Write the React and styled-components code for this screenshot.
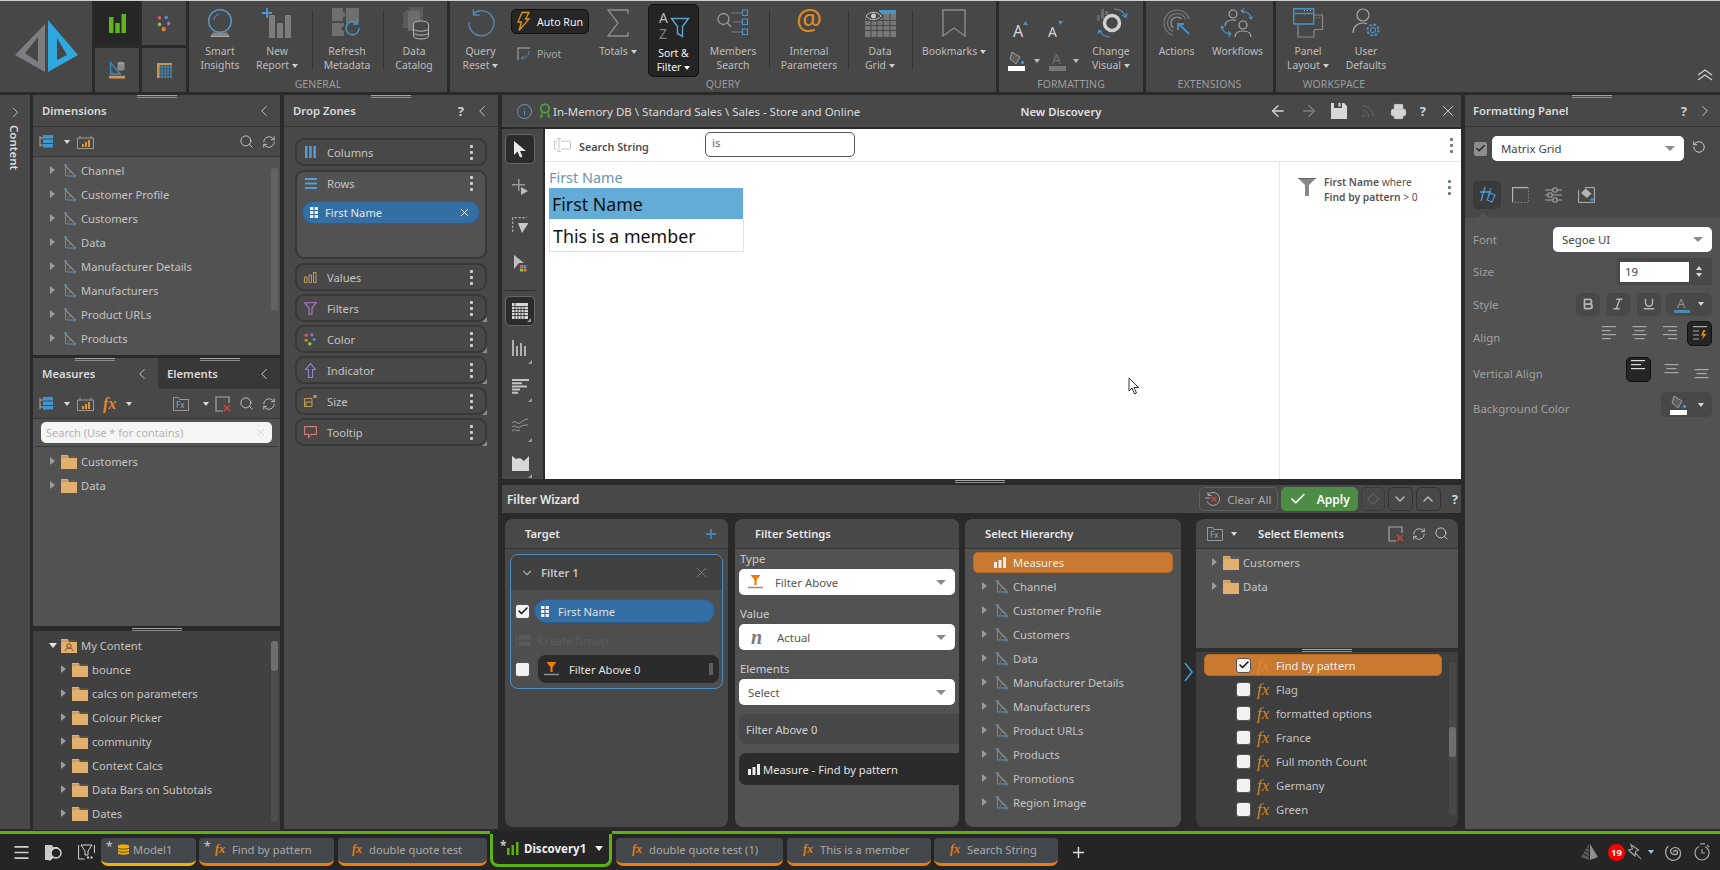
import React from 'react';
import styled, { createGlobalStyle } from 'styled-components';
import { ChevronLeft, ChevronRight, ChevronDown, ChevronUp, X, Search, RefreshCw, Plus, Check, ArrowLeft, ArrowRight, Printer, Rss, Info, Menu, RotateCcw, Bold, Italic, Underline } from 'lucide-react';

const Global = createGlobalStyle`
  html, body { margin: 0; padding: 0; width: 1720px; height: 870px; overflow: hidden; background: #2a2a2a; }
  * { box-sizing: border-box; }
  body { font-family: "Noto Sans", "Open Sans", sans-serif; font-size: 11.2px; color: #c4c4c4; }
`;

const Page = styled.div`width:1720px;height:870px;display:flex;flex-direction:column;background:#2a2a2a;overflow:hidden;`;
const Svg = styled.svg`display:block;flex:none;overflow:visible;`;

/* ---------- shared bits ---------- */
const Tri = styled.span`
  display:inline-block;flex:none;width:0;height:0;
  border-left:${p=>p.$s||3.5}px solid transparent;border-right:${p=>p.$s||3.5}px solid transparent;
  border-top:${p=>(p.$s||3.5)+1}px solid ${p=>p.$c||'#cfcfcf'};
  margin-left:${p=>p.$ml??3}px;vertical-align:1px;
`;
const Caret = styled.span`
  display:block;flex:none;width:0;height:0;margin-right:${p=>p.$open?3:5}px;
  ${p=>p.$open?'border-left:4px solid transparent;border-right:4px solid transparent;border-top:5px solid #e6e6e6;':'border-top:4px solid transparent;border-bottom:4px solid transparent;border-left:5px solid #9c9c9c;margin-left:1px;'}
`;
const Grip = styled.div`
  position:absolute;left:${p=>p.$x}px;top:${p=>p.$y||0}px;width:${p=>p.$w||40}px;height:3px;z-index:3;
  border-top:1px solid #a4a4a4;border-bottom:1px solid #8c8c8c;
`;
const FxMark = styled.span`
  flex:none;font-family:"Liberation Serif",serif;font-style:italic;font-weight:${p=>p.$fw||700};
  color:${p=>p.$c||'#e57f12'};font-size:${p=>p.$size||12}px;line-height:1;white-space:nowrap;
`;
const KebabWrap = styled.div`display:flex;flex-direction:column;gap:3px;flex:none;align-items:center;margin-top:${p=>p.$mt||0}px;`;
const KebabDot = styled.i`display:block;width:3px;height:3px;background:${p=>p.$c||'#d0d0d0'};border-radius:1px;`;
const Kebab = ({c, mt}) => <KebabWrap $mt={mt}><KebabDot $c={c}/><KebabDot $c={c}/><KebabDot $c={c}/></KebabWrap>;

const HierIcon = () => (
  <Svg width="15" height="15" viewBox="0 0 15 15" fill="none">
    <path d="M1.500 3L3.500 1L5.500 3M3.500 1V13H13M11.500 11.200L14 13L11.500 14.800" stroke="#5f94b8" strokeWidth="1"/>
    <path d="M4 3.500L11.500 11" stroke="#bdbdbd" strokeWidth="1"/>
    <path d="M6 11L9 8" stroke="#8a8a8a" strokeWidth=".8"/>
  </Svg>
);
const FolderIcon = () => (
  <Svg width="16" height="15" viewBox="0 0 16 15" fill="none">
    <path d="M0 1h7l1 3h8v11H0z" fill="#e1b06f"/>
    <path d="M0 3h16" stroke="#8e7350" strokeWidth=".6"/>
  </Svg>
);
const HierBars = ({c='#eee'}) => (
  <Svg width="12" height="11" viewBox="0 0 12 11"><path d="M0 5h3v6H0zM4.500 3h3v8h-3zM9 0h3v11H9z" fill={c}/></Svg>
);
const MemberGrid = ({c='#eee'}) => (
  <Svg width="8" height="11" viewBox="0 0 8 11"><path d="M0 0h3.400v3H0zM4.600 0H8v3H4.600zM0 4h3.400v3H0zM4.600 4H8v3H4.600zM0 8h3.400v3H0zM4.600 8H8v3H4.600z" fill={c}/></Svg>
);
const FilterAbove = () => (
  <Svg width="15" height="14" viewBox="0 0 15 14" fill="none">
    <path d="M2.500 0h10L8.600 5v5H6.400V5z" fill="#ef7d0a"/><path d="M0 12.500h15" stroke="#8f8f8f" strokeWidth="1.500"/>
  </Svg>
);
const FxFolder = () => (
  <Svg width="16" height="14" viewBox="0 0 16 14" fill="none">
    <path d="M.5 13.500V.5h5l1 2h9v11z" stroke="#9a9a9a"/>
    <text x="3" y="11" fontSize="8" fill="#a8a8a8" fontFamily="Noto Sans">Fx</text>
  </Svg>
);
const XSquare = () => (
  <Svg width="16" height="16" viewBox="0 0 16 16" fill="none">
    <path d="M14 7V1H1v14h7" stroke="#a8a8a8" strokeWidth="1.200"/><path d="M9 9l6 6M15 9l-6 6" stroke="#d8462f" strokeWidth="1.400"/>
  </Svg>
);
const CalcChart = () => (
  <Svg width="17" height="14" viewBox="0 0 17 14" fill="none">
    <path d="M.5 3h16v10.500H.5z" stroke="#9a9a9a"/><path d="M3 .5v3M14 .5v3" stroke="#9a9a9a"/>
    <path d="M5 9h2v3H5zM8 7h2v5H8zM11 5h2v7h-2z" fill="#e0952e"/>
  </Svg>
);
const TreeToggle = () => (
  <Svg width="15" height="13" viewBox="0 0 15 13" fill="none">
    <path d="M1 1v11M1 3h3M1 10h3" stroke="#a5a5a5"/><path d="M4 0h10v3.500H4zM4 4.500h10V8H4zM4 9h10v3.500H4z" fill="#3f97d1"/>
  </Svg>
);

/* ---------- ribbon ---------- */
const Ribbon = styled.header`height:92px;flex:none;display:flex;gap:3px;border-top:1px solid #cfcfcf;`;
const Block = styled.section`width:${p=>p.$w}px;${p=>p.$grow?'flex:1;':''}background:#474747;display:flex;flex-direction:column;position:relative;`;
const LogoBlock = styled(Block)`align-items:flex-start;justify-content:flex-start;padding:19px 0 0 15px;`;
const Tiles = styled.div`width:91px;display:grid;grid-template-columns:1fr 1fr;grid-template-rows:1fr 1fr;gap:3px;`;
const Tile = styled.div`background:${p=>p.$on?'#262626':'#474747'};display:flex;align-items:center;justify-content:center;`;
const GroupItems = styled.div`height:76px;display:flex;align-items:flex-start;flex:none;`;
const GroupName = styled.div`height:15px;line-height:14px;text-align:center;font-size:10.500px;color:#9c9c9c;letter-spacing:.1px;`;
const Item = styled.div`
  width:${p=>p.$w}px;margin-left:${p=>p.$ml||0}px;flex:none;height:${p=>p.$on?73:74}px;margin-top:${p=>p.$on?3:0}px;
  display:flex;flex-direction:column;align-items:center;padding-top:${p=>p.$on?0:2}px;
  ${p=>p.$on?'background:#242424;border:1px solid #111;border-radius:5px;':''}
`;
const IconBox = styled.div`height:40px;display:flex;align-items:center;justify-content:center;flex:none;margin-bottom:1px;`;
const ItemLabel = styled.div`font-size:10.400px;line-height:14px;text-align:center;white-space:nowrap;color:${p=>p.$on?'#f4f4f4':'#bdbdbd'};`;
const Divider = styled.div`width:1px;height:59px;margin:9px ${p=>p.$r||0}px 0 ${p=>p.$l||0}px;background:#333;flex:none;`;
const StackCol = styled.div`width:78px;flex:none;display:flex;flex-direction:column;`;
const AutoRunBtn = styled.div`
  margin-top:8px;width:78px;height:25px;background:#262626;border:1px solid #101010;border-radius:5px;
  display:flex;align-items:center;justify-content:center;gap:7px;color:#f2f2f2;font-size:10.600px;
`;
const PivotBtn = styled.div`margin:13px 0 0 6px;display:flex;align-items:center;gap:6px;color:#a6a6a6;font-size:10.400px;`;
const FormatGrid = styled.div`width:85px;flex:none;display:flex;flex-direction:column;`;
const FormatRow = styled.div`height:${p=>p.$h}px;display:flex;align-items:center;padding:${p=>p.$pt||0}px 0 0 ${p=>p.$pl}px;`;
const Gap = styled.div`width:${p=>p.$w}px;flex:none;`;
const WorkBody = styled.div`width:116px;display:flex;flex-direction:column;`;
const WorkRow = styled.div`display:flex;height:100%;`;
const Collapse = styled.div`margin-left:auto;padding:68px 7px 0 0;`;

const LogoMark = () => (
  <Svg width="64" height="54" viewBox="0 0 64 54">
    <path fillRule="evenodd" d="M30 4L0 35L30 52zM23 17L10 33L23 42z" fill="#7b7d80"/>
    <path fillRule="evenodd" d="M33 0L63 35L33 52zM42 18V40L52 35z" fill="#2fa8de"/>
  </Svg>
);
const TileBars = () => <Svg width="17" height="19" viewBox="0 0 19 19" preserveAspectRatio="none"><path d="M0 3h5v16H0zM7 9h5v10H7zM14 0h5v19h-5z" fill="#5db61e"/></Svg>;
const TileDots = () => (
  <Svg width="15" height="17" viewBox="0 0 18 18" preserveAspectRatio="none">
    <circle cx="3" cy="3" r="2" fill="#d85a5a"/><circle cx="11" cy="2.500" r="2" fill="#3f97d1"/>
    <circle cx="3" cy="10" r="2" fill="#8bc34a"/><circle cx="14" cy="9" r="2" fill="#9b6fce"/><circle cx="8" cy="15" r="2.500" fill="#e07b2e"/>
  </Svg>
);
const TileModel = () => (
  <Svg width="16" height="18" viewBox="0 0 20 22" fill="none" preserveAspectRatio="none">
    <path d="M2 16V2l12 14z" stroke="#4488b4" strokeWidth="1.800"/><path d="M4 12v3h3" stroke="#4488b4"/>
    <ellipse cx="15" cy="3" rx="4.500" ry="2" fill="#9a9a9a"/><path d="M10.500 4v6c0 2 9 2 9 0V4" fill="#8a8a8a"/>
    <path d="M0 18h20v3.500H0z" fill="#c99454"/>
  </Svg>
);
const TileGrid = () => (
  <Svg width="15" height="15" viewBox="0 0 17 20" fill="none" preserveAspectRatio="none">
    <path d="M0 0h17v3H0zM0 0h3v20H0z" fill="#c99454"/>
    <path d="M4 4h13v16H4z" fill="#4488b4"/>
    <path d="M4 8h13M4 12h13M4 16h13M7.500 4v16M11 4v16M14 4v16" stroke="#474747"/>
  </Svg>
);
const IcoBall = () => (
  <Svg width="26" height="29" viewBox="0 0 26 29" fill="none">
    <circle cx="13" cy="12" r="11.300" stroke="#5a9ac6" strokeWidth="1.400"/>
    <path d="M7 11c0-3 2-5 5-6" stroke="#5a9ac6"/>
    <path d="M6 23.500h14l3 4H3z" fill="#848484"/><path d="M4 27.500h18" stroke="#a8a8a8"/>
  </Svg>
);
const IcoNewReport = () => (
  <Svg width="30" height="30" viewBox="0 0 30 30" fill="none">
    <path d="M5 0v10M0 5h10" stroke="#4a9bd0" strokeWidth="1.800"/>
    <path d="M7 7h6v23H7zM15 15h6v15h-6zM23 7h6v23h-6z" fill="#7c7c7c"/>
  </Svg>
);
const IcoRefresh = () => (
  <Svg width="30" height="30" viewBox="0 0 30 30" fill="none">
    <path d="M0 0h11v4a2.500 2.500 0 0 1 0 5v4H0zM14 0h13v14h-6a7 7 0 0 0-7 2z" fill="#6f6f6f"/>
    <path d="M0 15h12v3a2.500 2.500 0 0 0 0 5v5H0z" fill="#6f6f6f"/>
    <path d="M27 20a6.500 6.500 0 1 1-2-4.500" stroke="#4b93c2" strokeWidth="1.500"/><path d="M25.500 11.500v4.500h-4.500" stroke="#4b93c2" strokeWidth="1.500"/>
  </Svg>
);
const IcoCatalog = () => (
  <Svg width="29" height="32" viewBox="0 0 29 32" fill="none">
    <path d="M3 5h3V3h3V0h14v24H9v-3H3z" fill="#5a5a5a"/><path d="M8 4h12v20H8z" fill="#6c6c6c"/>
    <ellipse cx="21" cy="17" rx="7.500" ry="3" fill="#474747" stroke="#b4b4b4"/>
    <path d="M13.500 17v12c0 4 15 4 15 0V17M13.500 21.500c0 3.500 15 3.500 15 0M13.500 25.500c0 3.500 15 3.500 15 0" fill="#474747" stroke="#b4b4b4"/>
  </Svg>
);
const IcoReset = () => (
  <Svg width="28" height="28" viewBox="0 0 28 28" fill="none">
    <path d="M6 5a12.500 12.500 0 1 1-4 8" stroke="#5488ad" strokeWidth="1.400"/><path d="M6.500 0v6h6" stroke="#5488ad" strokeWidth="1.400"/>
  </Svg>
);
const IcoBolt = () => (
  <Svg width="13" height="19" viewBox="0 0 13 19" fill="none"><path d="M5 .5h7L8.500 7H12L2 18.500 4.500 10H1z" stroke="#e2940f" strokeWidth="1.300"/></Svg>
);
const IcoPivot = () => (
  <Svg width="14" height="14" viewBox="0 0 14 14" fill="none">
    <path d="M1 13V1h12" stroke="#8a8a8a" strokeWidth="1.500"/>
    <path d="M12 4c0 5-3 7-7 7M7 8.500L4.500 11 7 13.500" stroke="#5488ad"/>
  </Svg>
);
const IcoSigma = () => (
  <Svg width="22" height="28" viewBox="0 0 22 28" fill="none"><path d="M21 5V1H1l10 13L1 27h20v-4" stroke="#909090" strokeWidth="1.300"/></Svg>
);
const IcoSort = () => (
  <Svg width="30" height="30" viewBox="0 0 30 30" fill="none">
    <text x="0" y="13" fontSize="14" fill="#bdbdbd" fontFamily="Noto Sans">A</text>
    <text x="0" y="29" fontSize="14" fill="#7e7e7e" fontFamily="Noto Sans">Z</text>
    <path d="M12.500 8.500h17l-6 8v10l-5-3v-7z" stroke="#5aa0cf" strokeWidth="1.500"/>
  </Svg>
);
const IcoMembers = () => (
  <Svg width="32" height="30" viewBox="0 0 32 30" fill="none">
    <circle cx="6.500" cy="11" r="5.500" stroke="#9a9a9a" strokeWidth="1.300"/><path d="M10.500 15L14 19" stroke="#9a9a9a" strokeWidth="1.300"/>
    <path d="M14 5h11M16 14h9M14 24h11" stroke="#7d7d7d"/>
    <path d="M25.500 2h5v5.500h-5zM25.500 11h5v5.500h-5zM25.500 21h5v5.500h-5z" stroke="#4b93c2" strokeWidth="1.200"/>
  </Svg>
);
const IcoAt = () => (
  <Svg width="28" height="30" viewBox="0 0 28 30">
    <text x="14" y="22" textAnchor="middle" fontSize="29" fill="#d98a22" fontFamily="Noto Sans">@</text>
  </Svg>
);
const IcoDataGrid = () => (
  <Svg width="31" height="27" viewBox="0 0 31 27" fill="none">
    <path d="M0 4h31v23H0z" fill="#777"/>
    <path d="M0 10.500h31M0 15.500h31M0 20.500h31M6 4v23M12 4v23M18 4v23M25 4v23" stroke="#474747"/>
    <path d="M14 0h17v4H14z" fill="#4b93c2"/>
    <ellipse cx="8.500" cy="6" rx="8.500" ry="5.500" fill="#474747"/>
    <path d="M1 6c4-5 11-5 15 0-4 5-11 5-15 0z" stroke="#c8c8c8"/><circle cx="8.500" cy="6" r="2.500" fill="#c8c8c8"/>
  </Svg>
);
const IcoBookmark = () => (
  <Svg width="24" height="28" viewBox="0 0 24 28" fill="none"><path d="M1 1h22v26L12 19 1 27z" stroke="#8a8a8a" strokeWidth="1.400"/></Svg>
);
const IcoFontSize = ({up}) => (
  <Svg width="16" height="18" viewBox="0 0 16 18" fill="none">
    <text x="0" y="17" fontSize={up?16:14} fill="#d4d4d4" fontFamily="Noto Sans">A</text>
    <path d={up?'M10 5l2.500-4L15 5z':'M10 1h5l-2.500 4z'} fill="#4b93c2"/>
  </Svg>
);
const IcoBucket = () => (
  <Svg width="18" height="20" viewBox="0 0 18 20" fill="none">
    <path d="M4 1l8 5-4 7-6-5z" stroke="#9c9c9c" fill="#5f5f5f"/><circle cx="14.500" cy="11.500" r="1.700" fill="#3f97d1"/>
    <path d="M0 15h17v5H0z" fill="#fff"/>
  </Svg>
);
const IcoFontColor = () => (
  <Svg width="18" height="20" viewBox="0 0 18 20" fill="none">
    <text x="3" y="13" fontSize="14" fill="#6e6e6e" fontFamily="Noto Sans">A</text><path d="M0 15h17v5H0z" fill="#777"/>
  </Svg>
);
const IcoChange = () => (
  <Svg width="32" height="32" viewBox="0 0 32 32" fill="none">
    <circle cx="17" cy="16" r="7.500" stroke="#d0d0d0" strokeWidth="3.500"/>
    <path d="M2 14h2.500V8H2zM6 12h3V2H6zM10 8h3V4h-3z" fill="#6a6a6a"/>
    <path d="M19 2c6 0 10 3 12 8M27 8l4 2.500 1-4.500M15 30c-5 0-9-3-11-7M7 25l-3-2-1 4" stroke="#4b93c2" strokeWidth="1.200"/>
  </Svg>
);
const IcoActions = () => (
  <Svg width="28" height="28" viewBox="0 0 28 28" fill="none">
    <circle cx="14" cy="14" r="13" stroke="#7a7a7a" strokeWidth="1.200"/><circle cx="14" cy="14" r="9.500" stroke="#7a7a7a" strokeWidth="1.200"/>
    <circle cx="14" cy="14" r="6" stroke="#9a9a9a" strokeWidth="1.200"/>
    <path d="M18 10h11v18H10v-9z" fill="#474747"/>
    <path d="M16 15l10 10" stroke="#4b93c2" strokeWidth="1.800"/><path d="M15 21v-6h6" stroke="#4b93c2" strokeWidth="1.800"/>
  </Svg>
);
const IcoWorkflows = () => (
  <Svg width="31" height="30" viewBox="0 0 31 30" fill="none">
    <circle cx="11" cy="6" r="4" stroke="#a8a8a8" strokeWidth="1.200"/><path d="M3 18c0-4 3-6 8-6 1 0 2 0 3 .5" stroke="#a8a8a8" strokeWidth="1.200"/>
    <circle cx="21" cy="17" r="4" stroke="#a8a8a8" strokeWidth="1.200"/><path d="M13 29c0-4 3-6 8-6s8 2 8 6" stroke="#a8a8a8" strokeWidth="1.200"/>
    <path d="M19 3c5 0 10 3 10 8l-2-2M29 11l1.500-2.500M19 3l3-2.500M19 3l3 2.500" stroke="#4b93c2" strokeWidth="1.100"/>
    <path d="M9 26c-5 0-9-3-9-8l2 2M0 18l-1.500 2.500M9 26l-3 2.500M9 26l-3-2.500" stroke="#4b93c2" strokeWidth="1.100"/>
  </Svg>
);
const IcoPanel = () => (
  <Svg width="30" height="30" viewBox="0 0 30 30" fill="none">
    <path d="M.7.700h20V16H.7z" stroke="#4b93c2" strokeWidth="1.400"/><path d="M.7 5.500h20" stroke="#4b93c2" strokeWidth="1.400"/>
    <path d="M11 2.500h1M14 2.500h1M17 2.500h1" stroke="#bcbcbc"/>
    <path d="M21 7h8.500v14.500H21" stroke="#8a8a8a" strokeWidth="1.200"/><path d="M23 9.500h1M26 9.500h1" stroke="#8a8a8a"/>
    <path d="M5 17v12h16v-7" stroke="#8a8a8a" strokeWidth="1.200"/>
  </Svg>
);
const IcoUser = () => (
  <Svg width="29" height="30" viewBox="0 0 29 30" fill="none">
    <circle cx="11" cy="7" r="6" stroke="#a8a8a8" strokeWidth="1.200"/><path d="M1 25c0-6 4-10 10-10 2 0 3 .3 4 1" stroke="#a8a8a8" strokeWidth="1.200"/>
    <circle cx="21" cy="22" r="2.500" stroke="#4b93c2" strokeWidth="1.200"/><circle cx="21" cy="22" r="5.500" stroke="#4b93c2" strokeWidth="2" strokeDasharray="2.500 1.800"/>
  </Svg>
);

const RibbonBar = () => (
  <Ribbon>
    <LogoBlock $w={92}><LogoMark/></LogoBlock>
    <Tiles>
      <Tile $on><TileBars/></Tile><Tile><TileDots/></Tile>
      <Tile><TileModel/></Tile><Tile><TileGrid/></Tile>
    </Tiles>
    <Block $w={258}>
      <GroupItems>
        <Item $w={62}><IconBox><IcoBall/></IconBox><ItemLabel>Smart<br/>Insights</ItemLabel></Item>
        <Item $w={52}><IconBox><IcoNewReport/></IconBox><ItemLabel>New<br/>Report<Tri/></ItemLabel></Item>
        <Divider $l={9} $r={4}/>
        <Item $w={60}><IconBox><IcoRefresh/></IconBox><ItemLabel>Refresh<br/>Metadata</ItemLabel></Item>
        <Divider $l={6} $r={4}/>
        <Item $w={52}><IconBox><IcoCatalog/></IconBox><ItemLabel>Data<br/>Catalog</ItemLabel></Item>
      </GroupItems>
      <GroupName>GENERAL</GroupName>
    </Block>
    <Block $w={546}>
      <GroupItems>
        <Item $w={61}><IconBox><IcoReset/></IconBox><ItemLabel>Query<br/>Reset<Tri/></ItemLabel></Item>
        <StackCol>
          <AutoRunBtn><IcoBolt/>Auto Run</AutoRunBtn>
          <PivotBtn><IcoPivot/>Pivot</PivotBtn>
        </StackCol>
        <Item $w={58}><IconBox><IcoSigma/></IconBox><ItemLabel>Totals<Tri/></ItemLabel></Item>
        <Item $w={51} $ml={1} $on><IconBox><IcoSort/></IconBox><ItemLabel $on>Sort &amp;<br/>Filter<Tri $c="#fff"/></ItemLabel></Item>
        <Item $w={64} $ml={2}><IconBox><IcoMembers/></IconBox><ItemLabel>Members<br/>Search</ItemLabel></Item>
        <Divider $l={4}/>
        <Item $w={76} $ml={1}><IconBox><IcoAt/></IconBox><ItemLabel>Internal<br/>Parameters</ItemLabel></Item>
        <Divider $l={1}/>
        <Item $w={60} $ml={1}><IconBox><IcoDataGrid/></IconBox><ItemLabel>Data<br/>Grid<Tri/></ItemLabel></Item>
        <Divider $l={2}/>
        <Item $w={76} $ml={3}><IconBox><IcoBookmark/></IconBox><ItemLabel>Bookmarks<Tri/></ItemLabel></Item>
      </GroupItems>
      <GroupName>QUERY</GroupName>
    </Block>
    <Block $w={144}>
      <GroupItems>
        <FormatGrid>
          <FormatRow $h={45} $pt={11} $pl={14}><IcoFontSize up/><Gap $w={19}/><IcoFontSize/></FormatRow>
          <FormatRow $h={30} $pl={9}><IcoBucket/><Tri $ml={8} $c="#bdbdbd"/><Gap $w={9}/><IcoFontColor/><Tri $ml={6} $c="#bdbdbd"/></FormatRow>
        </FormatGrid>
        <Item $w={54}><IconBox><IcoChange/></IconBox><ItemLabel>Change<br/>Visual<Tri/></ItemLabel></Item>
      </GroupItems>
      <GroupName>FORMATTING</GroupName>
    </Block>
    <Block $w={127}>
      <GroupItems>
        <Item $w={61}><IconBox><IcoActions/></IconBox><ItemLabel>Actions</ItemLabel></Item>
        <Item $w={61}><IconBox><IcoWorkflows/></IconBox><ItemLabel>Workflows</ItemLabel></Item>
      </GroupItems>
      <GroupName>EXTENSIONS</GroupName>
    </Block>
    <Block $grow>
      <WorkRow>
        <WorkBody>
          <GroupItems>
            <Item $w={64}><IconBox><IcoPanel/></IconBox><ItemLabel>Panel<br/>Layout<Tri/></ItemLabel></Item>
            <Item $w={52}><IconBox><IcoUser/></IconBox><ItemLabel>User<br/>Defaults</ItemLabel></Item>
          </GroupItems>
          <GroupName>WORKSPACE</GroupName>
        </WorkBody>
        <Collapse><Svg width="16" height="12" viewBox="0 0 16 12" fill="none"><path d="M1 6l7-5 7 5M1 11l7-5 7 5" stroke="#cfcfcf" strokeWidth="1.300"/></Svg></Collapse>
      </WorkRow>
    </Block>
  </Ribbon>
);

/* ---------- left column ---------- */
const Body = styled.main`height:734px;margin-top:3px;flex:none;display:flex;gap:4px;`;
const ContentStrip = styled.aside`width:30px;margin-right:-1px;background:#484848;display:flex;flex-direction:column;align-items:center;padding-top:9px;`;
const ContentText = styled.div`writing-mode:vertical-rl;margin-top:4px;font-size:11.500px;font-weight:600;color:#dcdcdc;margin-left:-1px;`;
const LeftCol = styled.div`width:247px;display:flex;flex-direction:column;position:relative;`;
const PanelHead = styled.div`
  height:${p=>p.$h||32}px;flex:none;display:flex;align-items:center;padding:0 ${p=>p.$pr||7}px 0 ${p=>p.$pl||9}px;position:relative;
  background:${p=>p.$dark?'#383838':'#484848'};border-bottom:1px solid #363636;
`;
const HeadTitle = styled.div`flex:1;font-size:11.300px;font-weight:600;color:#dadada;white-space:nowrap;`;
const HelpMark = styled.span`font-weight:700;font-size:13px;color:#d4d4d4;margin-right:${p=>p.$mr??9}px;`;
const Section = styled.section`position:relative;height:${p=>p.$h}px;flex:none;margin-top:${p=>p.$mt||0}px;background:${p=>p.$bg||'#525252'};display:flex;flex-direction:column;overflow:hidden;`;
const ToolBar = styled.div`height:${p=>p.$h||30}px;flex:none;display:flex;align-items:center;background:#484848;border-bottom:1px solid #363636;padding:0 4px 0 6px;`;
const ToolEnd = styled.div`margin-left:auto;display:flex;align-items:center;gap:8px;`;
const FxTool = styled.div`margin-left:9px;`;
const FolderTool = styled.div`margin-right:8px;`;
const XTool = styled.div`margin-left:-2px;`;
const List = styled.div`flex:1;padding-top:${p=>p.$pt||0}px;position:relative;overflow:hidden;`;
const TreeRow = styled.div`
  height:24px;display:flex;align-items:center;padding-left:${p=>p.$pad||16}px;white-space:nowrap;color:${p=>p.$c||'#c4c4c4'};
`;
const CaretBox = styled.div`width:12px;flex:none;display:flex;align-items:center;`;
const IconSlot = styled.div`width:16px;flex:none;display:flex;justify-content:center;margin-right:4px;`;
const Track = styled.div`
  position:absolute;right:${p=>p.$r||2}px;top:${p=>p.$t}px;width:7px;height:${p=>p.$h}px;border-radius:3px;background:${p=>p.$bg||'#606060'};
`;
const Thumb = styled.div`margin-top:${p=>p.$t||0}px;height:${p=>p.$h}px;background:#6e6e6e;border-radius:3px;`;
const Tabs2 = styled.div`display:flex;height:31px;flex:none;`;
const TabHead = styled(PanelHead)`width:${p=>p.$w}px;height:31px;border-bottom:0;`;
const SearchBox = styled.div`
  width:231px;height:21px;margin:3px 0 3px 8px;border-radius:5px;background:#f5f5f5;display:flex;align-items:center;padding:0 5px;
  color:#b4b4b4;font-size:11px;justify-content:space-between;white-space:nowrap;
`;
const SearchRule = styled.div`height:1px;margin:0 2px;background:#383838;flex:none;`;

const TreeItem = ({label, folder, pad, open}) => (
  <TreeRow $pad={pad}>
    <CaretBox><Caret $open={open}/></CaretBox>
    <IconSlot>{folder ? <FolderIcon/> : <HierIcon/>}</IconSlot>
    {label}
  </TreeRow>
);
const dims = ['Channel','Customer Profile','Customers','Data','Manufacturer Details','Manufacturers','Product URLs','Products'];
const Chev = ({Icon, c='#c8c8c8', s=18, sw=1.300}) => <Icon size={s} color={c} strokeWidth={sw}/>;

const ContentFolder = () => (
  <Svg width="16" height="15" viewBox="0 0 16 15" fill="none">
    <path d="M0 1h7l1 3h8v11H0z" fill="#e1b06f"/><path d="M0 3h16" stroke="#8e7350" strokeWidth=".6"/>
    <circle cx="8" cy="8" r="2.200" stroke="#7a4a1c"/><path d="M4 13c0-2 2-3 4-3s4 1 4 3" stroke="#7a4a1c"/>
  </Svg>
);

const LeftPanels = () => (
  <LeftCol>
    <Section $h={260}>
      <Grip $x={104}/>
      <PanelHead><HeadTitle>Dimensions</HeadTitle><Chev Icon={ChevronLeft}/></PanelHead>
      <ToolBar>
        <TreeToggle/><Tri $ml={10} $c="#d8d8d8"/><Gap $w={7}/><CalcChart/>
        <ToolEnd><Search size={15} color="#c8c8c8" strokeWidth={1.500}/><RefreshCw size={14} color="#c8c8c8" strokeWidth={1.500}/></ToolEnd>
      </ToolBar>
      <List $pt={1}>
        {dims.map(d => <TreeItem key={d} label={d}/>)}
        <Track $t={11} $h={143} $bg="#626262"/>
      </List>
    </Section>
    <Section $h={268} $mt={3}>
      <Grip $x={42}/><Grip $x={167}/>
      <Tabs2>
        <TabHead $w={125}><HeadTitle>Measures</HeadTitle><Chev Icon={ChevronLeft}/></TabHead>
        <TabHead $w={122} $dark><HeadTitle>Elements</HeadTitle><Chev Icon={ChevronLeft}/></TabHead>
      </Tabs2>
      <ToolBar>
        <TreeToggle/><Tri $ml={10} $c="#d8d8d8"/><Gap $w={7}/><CalcChart/>
        <FxTool><FxMark $size={16} $c="#e8842a">fx</FxMark></FxTool><Tri $ml={10} $c="#d8d8d8"/>
        <ToolEnd>
          <FolderTool><FxFolder/></FolderTool><Tri $ml={-2} $c="#d8d8d8"/><XTool><XSquare/></XTool>
          <Search size={15} color="#c8c8c8" strokeWidth={1.500}/><RefreshCw size={14} color="#c8c8c8" strokeWidth={1.500}/>
        </ToolEnd>
      </ToolBar>
      <SearchBox>Search (Use * for contains)<X size={13} color="#c8c8c8" strokeWidth={1.300}/></SearchBox>
      <SearchRule/>
      <List $pt={2}>
        <TreeItem folder label="Customers"/>
        <TreeItem folder label="Data"/>
      </List>
    </Section>
    <Grip $x={99} $y={533} $w={50}/>
    <Section $h={199} $mt={5} $bg="#414141">
      <List $pt={2}>
        <TreeRow><CaretBox><Caret $open/></CaretBox><IconSlot><ContentFolder/></IconSlot>My Content</TreeRow>
        {['bounce','calcs on parameters','Colour Picker','community','Context Calcs','Data Bars on Subtotals','Dates'].map(f => <TreeItem key={f} folder pad={27} label={f}/>)}
        <Track $t={10} $h={181} $bg="#4d4d4d"><Thumb $h={30}/></Track>
      </List>
    </Section>
  </LeftCol>
);

/* ---------- drop zones ---------- */
const DropCol = styled.section`width:214px;background:#484848;position:relative;display:flex;flex-direction:column;`;
const ZoneList = styled.div`padding:11px 11px 0 11px;display:flex;flex-direction:column;gap:3px;`;
const Zone = styled.div`
  height:${p=>p.$h||28}px;flex:none;border:2px solid #383838;border-radius:9px;position:relative;padding:0 12px 0 5px;
  background:${p=>p.$lit?'#525252':'#484848'};margin-bottom:${p=>p.$mb||0}px;
`;
const ZoneHead = styled.div`height:24px;display:flex;align-items:center;margin-top:${p=>p.$mt||0}px;`;
const ZoneIcon = styled.div`width:17px;display:flex;justify-content:center;margin-right:8px;flex:none;`;
const ZoneLabel = styled.div`flex:1;color:#c4c4c4;`;
const Corner = styled.i`position:absolute;right:-2px;bottom:-2px;width:0;height:0;border-left:5px solid transparent;border-bottom:5px solid #888;`;
const RowPill = styled.div`
  margin:6px -7px 0 0;height:23px;border-radius:12px;background:#336ea5;border:1px solid #2c5d8c;
  display:flex;align-items:center;padding:0 8px 0 7px;color:#e8e8e8;gap:7px;
`;
const PillText = styled.div`flex:1;`;

const ZoneColumns = () => <Svg width="11" height="12" viewBox="0 0 11 12"><path d="M0 0h2.500v12H0zM4.200 0h2.500v12H4.200zM8.400 0h2.500v12H8.400z" fill="#5b9bd0"/></Svg>;
const ZoneRows = () => <Svg width="12" height="11" viewBox="0 0 12 11"><path d="M0 0h12v2H0zM0 4.500h12v2H0zM0 9h12v2H0z" fill="#5b9bd0"/></Svg>;
const ZoneValues = () => <Svg width="13" height="11" viewBox="0 0 13 11" fill="none"><path d="M.5 5h2.500v5.500H.5zM5 3h2.500v7.500H5zM9.500.5H12v10H9.500z" stroke="#c09a5a"/></Svg>;
const ZoneFilter = () => <Svg width="13" height="13" viewBox="0 0 13 13" fill="none"><path d="M.7.700h11.600L8 6v6.300H5V6z" stroke="#b879c6" strokeWidth="1.100"/></Svg>;
const ZoneColor = () => (
  <Svg width="13" height="13" viewBox="0 0 18 18">
    <circle cx="3" cy="3" r="2.200" fill="#d85a5a"/><circle cx="11" cy="2.500" r="2.200" fill="#9b6fce"/>
    <circle cx="3" cy="10" r="2.200" fill="#e07b2e"/><circle cx="14" cy="9" r="2.200" fill="#3f97d1"/><circle cx="8" cy="15" r="2.500" fill="#8bc34a"/>
  </Svg>
);
const ZoneInd = () => <Svg width="11" height="15" viewBox="0 0 11 15" fill="none"><path d="M5.500.7L10.300 6.500H7.500v8h-4v-8H.7z" stroke="#8f86d6" strokeWidth="1.100"/></Svg>;
const ZoneSize = () => <Svg width="13" height="12" viewBox="0 0 13 12" fill="none"><path d="M.5 3.500h7.500v8H.5z" stroke="#c09a5a"/><path d="M2 11.500V7h6" stroke="#c09a5a"/><path d="M9.500 0h3v3h-3z" fill="#c09a5a"/></Svg>;
const ZoneTip = () => <Svg width="13" height="12" viewBox="0 0 13 12" fill="none"><path d="M.6.600h11.800v7.800H7l-2.500 3V8.400H.6z" stroke="#d27a73" strokeWidth="1.100"/></Svg>;

const DropPanel = () => (
  <DropCol>
    <Grip $x={87}/>
    <PanelHead><HeadTitle>Drop Zones</HeadTitle><HelpMark>?</HelpMark><Chev Icon={ChevronLeft}/></PanelHead>
    <ZoneList>
      <Zone $mb={1}><ZoneHead><ZoneIcon><ZoneColumns/></ZoneIcon><ZoneLabel>Columns</ZoneLabel><Kebab/></ZoneHead></Zone>
      <Zone $h={89} $lit $mb={1}>
        <ZoneHead $mt={-1}><ZoneIcon><ZoneRows/></ZoneIcon><ZoneLabel>Rows</ZoneLabel><Kebab/></ZoneHead>
        <RowPill><MemberGrid/><PillText>First Name</PillText><X size={13} color="#eee" strokeWidth={1.800}/></RowPill>
      </Zone>
      <Zone><ZoneHead><ZoneIcon><ZoneValues/></ZoneIcon><ZoneLabel>Values</ZoneLabel><Kebab/></ZoneHead></Zone>
      <Zone><ZoneHead><ZoneIcon><ZoneFilter/></ZoneIcon><ZoneLabel>Filters</ZoneLabel><Kebab/></ZoneHead><Corner/></Zone>
      <Zone><ZoneHead><ZoneIcon><ZoneColor/></ZoneIcon><ZoneLabel>Color</ZoneLabel><Kebab/></ZoneHead><Corner/></Zone>
      <Zone><ZoneHead><ZoneIcon><ZoneInd/></ZoneIcon><ZoneLabel>Indicator</ZoneLabel><Kebab/></ZoneHead><Corner/></Zone>
      <Zone><ZoneHead><ZoneIcon><ZoneSize/></ZoneIcon><ZoneLabel>Size</ZoneLabel><Kebab/></ZoneHead><Corner/></Zone>
      <Zone><ZoneHead><ZoneIcon><ZoneTip/></ZoneIcon><ZoneLabel>Tooltip</ZoneLabel><Kebab/></ZoneHead><Corner/></Zone>
    </ZoneList>
  </DropCol>
);

/* ---------- centre ---------- */
const Spacer = styled.div`flex:1;`;
const CenterCol = styled.div`width:959px;display:flex;flex-direction:column;position:relative;`;
const CenterHead = styled.div`height:32px;flex:none;background:#484848;display:flex;align-items:center;padding-left:14px;position:relative;color:#dcdcdc;`;
const Crumb = styled.div`width:452px;display:flex;align-items:center;white-space:nowrap;font-size:11.500px;`;
const CrumbBadge = styled.div`margin:0 1px 0 5px;`;
const CenterTitle = styled.div`font-weight:600;font-size:11.300px;width:186px;text-align:center;color:#e0e0e0;`;
const HeadIcons = styled.div`margin-left:auto;width:192px;display:flex;align-items:center;justify-content:space-between;padding-right:4px;`;
const Stage = styled.div`height:350px;margin-top:2px;flex:none;display:flex;position:relative;`;
const ToolRail = styled.div`width:43px;flex:none;background:#2a2a2a;padding-right:2px;`;
const RailInner = styled.div`height:100%;background:#484848;display:flex;flex-direction:column;align-items:center;padding:5px 5px 0 0;`;
const RailBtn = styled.div`
  width:30px;height:${p=>p.$h||38}px;flex:none;display:flex;align-items:center;justify-content:center;position:relative;
`;
const RailActive = styled(RailBtn)`height:30px;background:#2b2b2b;border:1px solid #686868;border-radius:5px;margin-bottom:${p=>p.$mb||4}px;`;
const RailRule = styled.div`width:30px;height:1px;background:#2e2e2e;margin:8px 0 5px;flex:none;`;
const Canvas = styled.div`flex:1;background:#fff;display:flex;flex-direction:column;position:relative;`;
const CanvasTop = styled.div`height:33px;flex:none;display:flex;align-items:center;border-bottom:1px solid #e6e6e6;padding:0 8px 0 9px;`;
const ParamLabel = styled.div`margin:2px 0 0 8px;width:126px;font-weight:600;font-size:10.800px;color:#4e4e4e;white-space:nowrap;`;
const ParamInput = styled.div`width:150px;height:25px;margin-top:-2px;border:1.500px solid #555;border-radius:5px;color:#666;font-size:11.500px;padding:2px 6px;`;
const CanvasMain = styled.div`flex:1;display:flex;min-height:0;`;
const GridArea = styled.div`flex:1;padding:6px 0 0 4px;`;
const GridTitle = styled.div`font-size:14.400px;line-height:20px;color:#6a94b4;height:20px;`;
const MatrixHead = styled.div`width:194px;height:31px;background:#63acd8;color:#111;font-size:17.800px;line-height:33px;padding-left:3px;white-space:nowrap;`;
const MatrixCell = styled.div`width:195px;height:33px;border:1px solid #e2e2e2;border-top:0;color:#111;font-size:17.800px;line-height:35px;padding-left:3px;white-space:nowrap;overflow:hidden;`;
const FilterPane = styled.div`width:182px;flex:none;border-left:1px solid #e6e6e6;display:flex;align-items:flex-start;padding:13px 10px 0 18px;`;
const FunnelWrap = styled.div`margin-top:3px;flex:none;`;
const FilterDesc = styled.div`flex:1;font-size:10.300px;line-height:14.500px;color:#555;margin-left:8px;`;
const Strong = styled.b`font-weight:600;`;
const Pointer = styled.div`position:absolute;left:583px;top:248px;`;

const Wizard = styled.div`flex:1;display:flex;flex-direction:column;margin-top:6px;position:relative;`;
const WizHead = styled.div`height:28px;flex:none;background:#484848;display:flex;align-items:center;padding:0 2px 0 5px;`;
const WizTitle = styled.div`font-size:11.800px;font-weight:600;color:#e8e8e8;flex:1;`;
const WizBtn = styled.div`
  height:${p=>p.$h||24}px;width:${p=>p.$w}px;margin-left:${p=>p.$ml||3}px;flex:none;border-radius:5px;border:1px solid ${p=>p.$b||'#333'};
  display:flex;align-items:center;justify-content:center;gap:${p=>p.$gap||6}px;color:${p=>p.$c||'#aaa'};background:${p=>p.$bg||'transparent'};
  font-size:${p=>p.$fs||11.500}px;font-weight:${p=>p.$fw||400};
`;
const WizHelp = styled(HelpMark)`margin:0 1px 0 11px;`;
const WizCols = styled.div`height:308px;margin-top:6px;display:flex;padding-left:3px;flex:none;`;
const WizCard = styled.section`
  width:${p=>p.$w}px;margin-left:${p=>p.$ml||0}px;flex:none;border-radius:8px;overflow:hidden;background:${p=>p.$bg||'#484848'};display:flex;flex-direction:column;position:relative;
`;
const CardHead = styled.div`height:30px;flex:none;background:#484848;border-bottom:1px solid #363636;display:flex;align-items:center;padding:0 9px 0 ${p=>p.$pl||20}px;`;
const CardTitle = styled.div`flex:${p=>p.$fit?'none':'1'};font-size:11.200px;font-weight:600;color:#e8e8e8;margin-left:${p=>p.$ml||0}px;`;
const FilterBox = styled.div`margin:5px 5px 0 5px;height:135px;border:1.500px solid #4a90c8;border-radius:8px;overflow:hidden;background:#4e4e4e;flex:none;`;
const FilterBoxHead = styled.div`height:35px;background:#414141;display:flex;align-items:center;padding:0 12px 0 9px;gap:7px;color:#c4c4c4;font-weight:600;`;
const FilterRow = styled.div`height:${p=>p.$h||24}px;margin-top:${p=>p.$mt||0}px;display:flex;align-items:center;padding:0 ${p=>p.$pr||4}px 0 4px;gap:${p=>p.$gap||6}px;`;
const Check2 = styled.div`
  width:15px;height:15px;flex:none;border-radius:3px;background:#f2f2f2;border:1px solid #555;display:flex;align-items:center;justify-content:center;
`;
const BluePill = styled.div`flex:1;height:24px;border-radius:12px;background:#336ea5;border:1px solid #2c5d8c;display:flex;align-items:center;padding-left:6px;gap:9px;color:#e0e0e0;margin-right:3px;`;
const GhostText = styled.div`color:#5c5c5c;`;
const DarkPill = styled.div`flex:1;height:28px;margin-left:3px;border-radius:8px;background:#2b2b2b;display:flex;align-items:center;padding:0 6px;gap:10px;color:#e2e2e2;`;
const Handle = styled.i`margin-left:auto;width:4px;height:12px;background:#5e5e5e;`;
const FieldLabel = styled.div`font-size:11.400px;color:#cfcfcf;height:${p=>p.$h||20}px;display:flex;align-items:flex-end;padding:0 0 2px 5px;line-height:16px;`;
const Dropdown = styled.div`
  height:${p=>p.$h||26}px;margin:${p=>p.$m||'0 4px'};background:${p=>p.$bg||'#fff'};border-radius:5px;display:flex;align-items:center;
  padding:0 9px 0 ${p=>p.$pl||9}px;gap:${p=>p.$gap||9}px;color:${p=>p.$c||'#555'};font-size:${p=>p.$fs||11.400}px;flex:none;
  width:${p=>p.$w?p.$w+'px':'auto'};
`;
const DropArrow = styled.i`margin-left:auto;width:0;height:0;border-left:5px solid transparent;border-right:5px solid transparent;border-top:5px solid #8a8a8a;`;
const SumRow = styled.div`height:${p=>p.$h}px;margin:${p=>p.$mt}px 0 0 4px;background:${p=>p.$bg};border-radius:7px 0 0 7px;display:flex;align-items:center;padding-left:${p=>p.$pl||7}px;gap:3px;color:${p=>p.$c||'#d2d2d2'};flex:none;`;
const OrangeRow = styled.div`
  height:${p=>p.$h||21}px;margin:${p=>p.$m};background:#c97930;border:1px solid #b46a24;border-radius:5px;display:flex;align-items:center;color:#ececec;flex:none;
  padding-left:${p=>p.$pl||0}px;gap:${p=>p.$gap||6}px;
`;
const CollapseArrow = styled.div`width:15px;flex:none;display:flex;justify-content:center;padding-top:143px;`;
const ElemTree = styled.div`height:99px;padding-top:1px;background:#525252;flex:none;`;
const ElemList = styled.div`flex:1;background:#3e3e3e;padding-top:2px;margin-top:4px;position:relative;overflow:hidden;`;
const ElemRow = styled.div`height:24px;display:flex;align-items:center;padding-left:40px;gap:6px;color:#c4c4c4;white-space:nowrap;`;
const ElemFx = styled.div`width:15px;flex:none;margin-right:-2px;`;
const ElemHeadIcons = styled.div`display:flex;align-items:center;gap:8px;margin-left:auto;`;

const IcoCursor = () => <Svg width="12" height="18" viewBox="0 0 12 18"><path d="M1 1v13l3-3 2.500 6 2-1-2.500-5.500H10.500z" fill="#fff" stroke="#333"/></Svg>;
const RailCorner = styled.i`position:absolute;right:3px;bottom:3px;width:0;height:0;border-left:4px solid transparent;border-bottom:4px solid #9a9a9a;`;
const ElemMark = ({c='#d8861e'}) => <ElemFx><FxMark $size={17} $fw={400} $c={c}>fx</FxMark></ElemFx>;

const CenterPanel = () => (
  <CenterCol>
    <CenterHead>
      <Crumb>
        <Info size={17} color="#5e9ac6" strokeWidth={1.400}/>
        <CrumbBadge><Svg width="14" height="16" viewBox="0 0 14 16" fill="none"><circle cx="7" cy="5.500" r="4.200" stroke="#4f9a3e" strokeWidth="2"/><path d="M3.500 9L1.500 15.500 5 13.500M10.500 9l2 6.500-3.500-2" fill="#4f9a3e"/></Svg></CrumbBadge>
        In-Memory DB \ Standard Sales \ Sales - Store and Online
      </Crumb>
      <CenterTitle>New Discovery</CenterTitle>
      <HeadIcons>
        <ArrowLeft size={18} color="#d4d4d4" strokeWidth={1.800}/>
        <ArrowRight size={18} color="#7c7c7c" strokeWidth={1.800}/>
        <Svg width="16" height="16" viewBox="0 0 16 16"><path d="M0 0h3v5h8V0h2l3 3v13H0z" fill="#d8d8d8"/><path d="M7.500 0h2v3.500h-2z" fill="#d8d8d8"/></Svg>
        <Rss size={16} color="#686868" strokeWidth={1.400}/>
        <Printer size={17} color="#d4d4d4" fill="#d4d4d4" strokeWidth={1.200}/>
        <HelpMark $mr={0}>?</HelpMark>
        <X size={18} color="#d4d4d4" strokeWidth={1.200}/>
      </HeadIcons>
    </CenterHead>
    <Stage>
      <ToolRail>
        <RailInner>
          <RailActive $mb={4}><Svg width="14" height="17" viewBox="0 0 14 17"><path d="M1 0v14l3.500-3.500L7 16.500l2.500-1L7 10h6z" fill="#e8e8e8"/></Svg></RailActive>
          <RailBtn><Svg width="16" height="16" viewBox="0 0 16 16"><path d="M6 0h1.500v12H6zM0 5h13v1.500H0z" fill="#999"/><path d="M9 8l7 4-7 4z" fill="#bdbdbd"/></Svg></RailBtn>
          <RailBtn><Svg width="17" height="17" viewBox="0 0 17 17" fill="none"><path d="M.7 15V.7H15" stroke="#a8a8a8" strokeDasharray="2.500 1.500" strokeWidth="1.200"/><path d="M6 6h10.500L10 16z" fill="#c8c8c8"/></Svg></RailBtn>
          <RailBtn><Svg width="14" height="17" viewBox="0 0 14 17"><path d="M1 0l10 8H6l-5 6z" fill="#c0c0c0"/><path d="M7 10h3v3H7z" fill="#d85a5a"/><path d="M10.500 10h3v3h-3z" fill="#3f97d1"/><path d="M7 13.500h3v3H7z" fill="#8bc34a"/><path d="M10.500 13.500h3v3h-3z" fill="#e07b2e"/></Svg></RailBtn>
          <RailRule/>
          <RailActive $mb={3}>
            <Svg width="16" height="16" viewBox="0 0 16 16"><path d="M0 0h16v16H0z" fill="#d8d8d8"/><path d="M0 3.500h16M0 6.500h16M0 9.500h16M0 12.500h16M3 0v16M6 3v13M9 3v13M12 3v13" stroke="#2b2b2b" strokeWidth=".8"/></Svg>
            <RailCorner/>
          </RailActive>
          <RailBtn><Svg width="17" height="16" viewBox="0 0 17 16"><path d="M0 0h2v16H0zM4 6h2v10H4zM8 3h2v13H8zM12 6h2v10h-2z" fill="#b0b0b0"/></Svg><RailCorner/></RailBtn>
          <RailBtn $h={38}><Svg width="17" height="15" viewBox="0 0 17 15"><path d="M0 0h17v2H0zM0 3.200h10v2H0zM0 6.400h15v2H0zM0 9.600h8v2H0zM0 12.800h6v2H0z" fill="#c4c4c4"/></Svg><RailCorner/></RailBtn>
          <RailBtn $h={40}><Svg width="17" height="14" viewBox="0 0 17 14" fill="none"><path d="M0 5c3-4 5 2 8 0s5-4 8-4M0 9c3-3 5 2 8 0s5-2 8-2M0 13c3-3 5 1 8-1" stroke="#9a9a9a"/></Svg><RailCorner/></RailBtn>
          <RailBtn $h={36}><Svg width="17" height="15" viewBox="0 0 17 15"><path d="M0 0l4 3 4-1 4 3 5-5v15H0z" fill="#d8d8d8"/></Svg><RailCorner/></RailBtn>
        </RailInner>
      </ToolRail>
      <Canvas>
        <CanvasTop>
          <Svg width="17" height="14" viewBox="0 0 17 14" fill="none"><path d="M3 3H.5v8H3M7 3h9.500v8H7" stroke="#c8c8c8"/><path d="M3 .5h4M3 13.500h4M5 .5v13" stroke="#c8c8c8"/></Svg>
          <ParamLabel>Search String</ParamLabel>
          <ParamInput>is</ParamInput>
          <Spacer/>
          <Kebab c="#6a7a86"/>
        </CanvasTop>
        <CanvasMain>
          <GridArea>
            <GridTitle>First Name</GridTitle>
            <MatrixHead>First Name</MatrixHead>
            <MatrixCell>This is a member</MatrixCell>
          </GridArea>
          <FilterPane>
            <FunnelWrap><Svg width="18" height="18" viewBox="0 0 18 18"><path d="M0 0h18l-7 7v11H7V7z" fill="#888"/><path d="M0 0h18v1H0z" fill="#666"/></Svg></FunnelWrap>
            <FilterDesc><Strong>First Name</Strong> where<br/><Strong>Find by pattern</Strong> &gt; 0</FilterDesc>
            <Kebab c="#6a7a86" mt={5}/>
          </FilterPane>
        </CanvasMain>
        <Pointer><IcoCursor/></Pointer>
      </Canvas>
    </Stage>
    <Wizard>
      <Grip $x={453} $y={-5} $w={50}/>
      <WizHead>
        <WizTitle>Filter Wizard</WizTitle>
        <WizBtn $w={79} $b="#5f5f5f"><Svg width="16" height="15" viewBox="0 0 16 15" fill="none"><path d="M3 3a6.500 6.500 0 1 1-1 6" stroke="#a8a8a8"/><path d="M3 0v3.500h3.500M0 6h5" stroke="#a8a8a8"/><path d="M6.500 4.500l5 5M11.500 4.500l-5 5" stroke="#d8462f" strokeWidth="1.200"/></Svg>Clear All</WizBtn>
        <WizBtn $w={77} $bg="#4d8c45" $b="#4d8c45" $c="#fff" $fw={600} $gap={10} $fs={12}><Check size={18} color="#fff" strokeWidth={2.200}/>Apply</WizBtn>
        <WizBtn $w={24} $b="#3a3a3a"><Svg width="12" height="12" viewBox="0 0 12 12" fill="none"><path d="M6 .5L11.500 6 6 11.500.5 6z" stroke="#6e6e6e"/></Svg></WizBtn>
        <WizBtn $w={25}><ChevronDown size={16} color="#c0c0c0"/></WizBtn>
        <WizBtn $w={25}><ChevronUp size={16} color="#c0c0c0"/></WizBtn>
        <WizHelp>?</WizHelp>
      </WizHead>
      <WizCols>
        <WizCard $w={223}>
          <CardHead><CardTitle>Target</CardTitle><Plus size={16} color="#3f97d1" strokeWidth={2}/></CardHead>
          <FilterBox>
            <FilterBoxHead><ChevronDown size={14} color="#a8a8a8"/>Filter 1<Spacer/><X size={17} color="#8c8c8c" strokeWidth={1.100}/></FilterBoxHead>
            <FilterRow $mt={9} $gap={4}>
              <Check2><Check size={12} color="#111" strokeWidth={3}/></Check2>
              <BluePill><MemberGrid/>First Name</BluePill>
            </FilterRow>
            <FilterRow $mt={4} $h={26} $gap={8}>
              <Svg width="15" height="13" viewBox="0 0 15 13" fill="none"><path d="M2 1C1 1 1 2 1 6.500S1 12 2 12" stroke="#5a5a5a"/><path d="M4 1h11v4.500H4zM4 7.500h11V12H4z" fill="#5a5a5a"/></Svg>
              <GhostText>Create Group</GhostText>
            </FilterRow>
            <FilterRow $mt={0} $h={32} $pr={3} $gap={5}>
              <Check2/>
              <DarkPill><FilterAbove/>Filter Above 0<Handle/></DarkPill>
            </FilterRow>
          </FilterBox>
        </WizCard>
        <WizCard $w={224} $ml={7} $bg="#525252">
          <CardHead><CardTitle>Filter Settings</CardTitle></CardHead>
          <FieldLabel>Type</FieldLabel>
          <Dropdown><FilterAbove/>&nbsp;Filter Above<DropArrow/></Dropdown>
          <FieldLabel $h={29}>Value</FieldLabel>
          <Dropdown $pl={12}><FxMark $size={20} $c="#7a7a7a">n</FxMark>&nbsp;&nbsp;Actual<DropArrow/></Dropdown>
          <FieldLabel $h={29}>Elements</FieldLabel>
          <Dropdown>Select<DropArrow/></Dropdown>
          <SumRow $h={30} $mt={9} $bg="#474747">Filter Above 0</SumRow>
          <SumRow $h={32} $mt={9} $bg="#2b2b2b" $c="#e2e2e2" $pl={9}><HierBars/>Measure - Find by pattern</SumRow>
        </WizCard>
        <WizCard $w={216} $ml={6} $bg="#525252">
          <CardHead><CardTitle>Select Hierarchy</CardTitle></CardHead>
          <OrangeRow $m="3px 8px 1px 8px" $pl={20} $gap={7}><HierBars/>Measures</OrangeRow>
          {['Channel','Customer Profile','Customers','Data','Manufacturer Details','Manufacturers','Product URLs','Products','Promotions','Region Image'].map(d => <TreeItem key={d} label={d}/>)}
        </WizCard>
        <CollapseArrow><Svg width="9" height="20" viewBox="0 0 9 20" fill="none"><path d="M1 1l7 9-7 9" stroke="#3f97d1" strokeWidth="1.700"/></Svg></CollapseArrow>
        <WizCard $w={262} $bg="#2e2e2e">
          <Grip $x={106} $y={130} $w={50}/>
          <CardHead $pl={11}>
            <FxFolder/><Tri $ml={8} $c="#d8d8d8"/>
            <CardTitle $fit $ml={21}>Select Elements</CardTitle>
            <ElemHeadIcons><XSquare/><RefreshCw size={14} color="#c8c8c8" strokeWidth={1.500}/><Search size={15} color="#c8c8c8" strokeWidth={1.500}/></ElemHeadIcons>
          </CardHead>
          <ElemTree>
            <TreeItem folder pad={15} label="Customers"/>
            <TreeItem folder pad={15} label="Data"/>
          </ElemTree>
          <ElemList>
            <OrangeRow $h={22} $m="0 16px 1px 8px" $pl={31}><Check2><Check size={12} color="#111" strokeWidth={3}/></Check2><ElemMark c="#dd8a30"/>Find by pattern</OrangeRow>
            {['Flag','formatted options','France','Full month Count','Germany','Green'].map(t => (
              <ElemRow key={t}><Check2/><ElemMark/>{t}</ElemRow>
            ))}
            <Track $t={10} $h={153} $bg="#484848" $r={2}><Thumb $t={65} $h={30}/></Track>
          </ElemList>
        </WizCard>
      </WizCols>
    </Wizard>
  </CenterCol>
);

/* ---------- right panel ---------- */
const RightCol = styled.aside`width:255px;display:flex;flex-direction:column;position:relative;background:#525252;`;
const RightTop = styled.div`height:91px;flex:none;background:#484848;padding:9px 8px 0 9px;position:relative;`;
const SelectRow = styled.div`display:flex;align-items:center;height:25px;gap:5px;`;
const ResetWrap = styled.div`margin-left:3px;`;
const Check3 = styled.div`width:13px;height:14px;background:#8e8e8e;border-radius:2px;display:flex;align-items:center;justify-content:center;flex:none;`;
const RightTabs = styled.div`display:flex;margin:20px 0 0 -1px;`;
const RightTab = styled.div`width:${p=>p.$w||28}px;height:28px;margin-right:${p=>p.$mr||5}px;border-radius:5px;background:${p=>p.$on?'#3a3a3a':'transparent'};display:flex;align-items:center;justify-content:center;flex:none;`;
const Notch = styled.i`position:absolute;left:12px;bottom:0;width:0;height:0;border-left:6px solid transparent;border-right:6px solid transparent;border-bottom:5px solid #525252;`;
const FormRow = styled.div`height:${p=>p.$h}px;margin:${p=>p.$t}px ${p=>p.$mr||8}px 0 8px;display:flex;align-items:center;flex:none;`;
const FormLabel = styled.div`flex:1;color:#a0a0a0;font-size:11.400px;padding-top:${p=>p.$pt||0}px;`;
const SizeBox = styled.div`width:95px;height:27px;background:#484848;display:flex;align-items:center;padding-left:3px;gap:6px;`;
const SizeInput = styled.div`width:69px;height:20px;background:#fff;color:#444;font-size:11.400px;padding-left:5px;line-height:20px;`;
const Spin = styled.div`display:flex;flex-direction:column;gap:3px;align-items:center;margin-left:1px;`;
const SpinUp = styled.i`width:0;height:0;border-left:3.500px solid transparent;border-right:3.500px solid transparent;border-bottom:4px solid #d8d8d8;`;
const SpinDown = styled.i`width:0;height:0;border-left:3.500px solid transparent;border-right:3.500px solid transparent;border-top:4px solid #d8d8d8;`;
const StyleBtn = styled.div`
  width:${p=>p.$w||24}px;height:${p=>p.$h||23}px;margin-left:${p=>p.$ml??6}px;border-radius:5px;flex:none;background:${p=>p.$on?'#252525':p.$plain?'transparent':'#484848'};
  ${p=>p.$on?'border:1px solid #111;':''}display:flex;align-items:${p=>p.$v||'center'};justify-content:center;gap:4px;padding:${p=>p.$v?'2px 0':'0'};
`;
const Lines = ({w=[14,9,14,9], align='l', c='#a8a8a8'}) => (
  <Svg width="15" height={w.length===3?11:15} viewBox={`0 0 15 ${w.length===3?11:15}`}>
    {w.map((n,i)=>{ const x = align==='l'?0:align==='r'?15-n:(15-n)/2; return <rect key={i} x={x} y={i*4} width={n} height="1.200" fill={c}/>; })}
  </Svg>
);

const RightPanel = () => (
  <RightCol>
    <Grip $x={107}/>
    <PanelHead $pl={8} $pr={6}><HeadTitle>Formatting Panel</HeadTitle><HelpMark>?</HelpMark><Chev Icon={ChevronRight}/></PanelHead>
    <RightTop>
      <SelectRow>
        <Check3><Check size={11} color="#222" strokeWidth={3}/></Check3>
        <Dropdown $w={192} $h={25} $m="0" $c="#444">Matrix Grid<DropArrow/></Dropdown>
        <ResetWrap><RotateCcw size={14} color="#d4d4d4" strokeWidth={1.600}/></ResetWrap>
      </SelectRow>
      <RightTabs>
        <RightTab $on $mr={5}><Svg width="17" height="17" viewBox="0 0 17 17" fill="none"><path d="M1 5h11M6 0L2 14" stroke="#4a9bd8" strokeWidth="1.400"/><path d="M11 6l5 2-3 7-5-2z" stroke="#4a9bd8" strokeWidth="1.200"/><path d="M12 1L9 9" stroke="#4a9bd8"/></Svg></RightTab>
        <RightTab $mr={5}><Svg width="17" height="16" viewBox="0 0 17 16" fill="none"><path d="M.6 15V.6H16" stroke="#b4b4b4" strokeWidth="1.200"/><path d="M16.400.6V15.400H.6" stroke="#8a8a8a" strokeDasharray="1.500 1.500"/></Svg></RightTab>
        <RightTab $mr={5}><Svg width="17" height="14" viewBox="0 0 17 14" fill="none"><path d="M0 2h8M12 2h5M0 7h3M7 7h10M0 12h8M12 12h5" stroke="#a8a8a8"/><path d="M8 0h4v4H8zM3 5h4v4H3zM8 10h4v4H8z" stroke="#a8a8a8"/></Svg></RightTab>
        <RightTab><Svg width="17" height="16" viewBox="0 0 17 16" fill="none"><path d="M.6 3V15.400H16.400V.6H7" stroke="#b4b4b4"/><path d="M3 6L7.500 1.500 13.500 6.500 9 11z" fill="#b4b4b4"/><circle cx="14" cy="12.500" r="1.600" fill="#3f97d1"/></Svg></RightTab>
      </RightTabs>
      <Notch/>
    </RightTop>
    <FormRow $t={8} $h={26}><FormLabel>Font</FormLabel><Dropdown $w={159} $h={25} $m="0" $c="#444">Segoe UI<DropArrow/></Dropdown></FormRow>
    <FormRow $t={6} $h={27}><FormLabel>Size</FormLabel><SizeBox><SizeInput>19</SizeInput><Spin><SpinUp/><SpinDown/></Spin></SizeBox></FormRow>
    <FormRow $t={7} $h={24}>
      <FormLabel>Style</FormLabel>
      <StyleBtn><Bold size={14} color="#b4b4b4" strokeWidth={3}/></StyleBtn>
      <StyleBtn><Italic size={14} color="#b4b4b4" strokeWidth={2.500}/></StyleBtn>
      <StyleBtn $ml={7}><Underline size={14} color="#b4b4b4" strokeWidth={2.500}/></StyleBtn>
      <StyleBtn $w={46} $ml={5}>
        <Svg width="16" height="17" viewBox="0 0 16 17"><text x="3" y="12" fontSize="13" fill="#8e8e8e" fontFamily="Noto Sans">A</text><path d="M0 14h16v3H0z" fill="#4a88ad"/></Svg>
        <Tri $ml={4} $c="#d8d8d8"/>
      </StyleBtn>
    </FormRow>
    <FormRow $t={5} $h={25}>
      <FormLabel $pt={7}>Align</FormLabel>
      <StyleBtn $plain $w={15}><Lines align="l"/></StyleBtn>
      <StyleBtn $plain $w={15} $ml={15}><Lines w={[14,10,14,10]} align="c"/></StyleBtn>
      <StyleBtn $plain $w={15} $ml={15}><Lines align="r"/></StyleBtn>
      <StyleBtn $on $w={25} $h={25} $ml={10}><Svg width="16" height="15" viewBox="0 0 16 15" fill="none"><path d="M1 .6h14M1 5h6M1 9h6M1 13h6" stroke="#a8a8a8" strokeWidth="1.200"/><path d="M11.500 4L9 9.500h2.500L9.500 14l5-6h-3l2-4z" fill="#e2940f"/></Svg></StyleBtn>
    </FormRow>
    <FormRow $t={11} $h={25} $mr={11}>
      <FormLabel $pt={7}>Vertical Align</FormLabel>
      <StyleBtn $on $w={25} $h={25} $ml={0} $v="flex-start"><Lines w={[14,10,14]} c="#dcdcdc"/></StyleBtn>
      <StyleBtn $plain $w={15} $ml={13}><Lines w={[14,10,14]} align="c"/></StyleBtn>
      <StyleBtn $plain $w={15} $ml={15} $h={25} $v="flex-end"><Lines w={[14,10,14]} align="c"/></StyleBtn>
    </FormRow>
    <FormRow $t={10} $h={25}>
      <FormLabel $pt={7}>Background Color</FormLabel>
      <StyleBtn $w={51} $h={25} $ml={0}><IcoBucket/><Tri $ml={6} $c="#d8d8d8"/></StyleBtn>
    </FormRow>
  </RightCol>
);

/* ---------- bottom tabs ---------- */
const TabBar = styled.footer`height:39px;margin-top:2px;flex:none;background:#252525;border-top:3px solid #5cb20f;display:flex;align-items:flex-start;padding-top:4px;position:relative;`;
const BarIcon = styled.div`width:${p=>p.$w}px;margin-left:${p=>p.$ml||0}px;height:28px;display:flex;align-items:center;justify-content:center;flex:none;`;
const DocTab = styled.div`
  width:${p=>p.$w}px;margin-left:${p=>p.$ml||3}px;height:28px;flex:none;background:#44484c;border-bottom:3px solid ${p=>p.$c||'#ef7d0a'};
  border-radius:4px 4px 7px 7px;display:flex;align-items:center;padding:0 0 3px ${p=>p.$pad||4}px;color:#a9a9a9;white-space:nowrap;font-size:11.200px;position:relative;
`;
const Star = styled.span`width:12px;flex:none;color:#c8c8c8;font-size:12px;margin-top:-6px;padding-left:1px;`;
const TabFx = styled(FxMark)`width:11px;margin-right:6px;`;
const DbWrap = styled.div`margin:0 4px 0 1px;`;
const ActiveTab = styled.div`
  width:122px;height:33px;margin:-4px 0 0 3px;flex:none;background:#252525;border:3px solid #5cb20f;border-top:0;border-radius:0 0 8px 8px;
  display:flex;align-items:center;padding:0 0 2px 6px;color:#f0f0f0;font-weight:700;font-size:11.500px;position:relative;z-index:2;white-space:nowrap;
  box-shadow:0 -3px 0 #252525;
`;
const ActiveStar = styled(Star)`width:7px;`;
const GreenBarsWrap = styled.span`margin:0 5px 0 1px;flex:none;`;
const BarRight = styled.div`margin-left:auto;display:flex;align-items:center;height:28px;padding-right:9px;`;
const Badge = styled.div`width:17px;height:17px;margin-left:9px;border-radius:50%;background:#f00;color:#fff;font-size:9.500px;font-weight:700;display:flex;align-items:center;justify-content:center;flex:none;`;
const PinWrap = styled.div`margin-left:2px;`;
const SpiralWrap = styled.div`margin-left:11px;`;
const ClockWrap = styled.div`margin-left:12px;`;

const TabsFooter = () => (
  <TabBar>
    <BarIcon $w={42}><Menu size={19} color="#cfcfcf" strokeWidth={2.200}/></BarIcon>
    <BarIcon $w={24}><Svg width="18" height="17" viewBox="0 0 18 17" fill="none"><path d="M0 1h7l1 2h5v6l-7 7H0z" fill="#c8c8c8"/><circle cx="11" cy="9" r="5" stroke="#d8d8d8" fill="#252525" strokeWidth="1.400"/><path d="M7.500 13L4 16.500" stroke="#d8d8d8" strokeWidth="1.400"/></Svg></BarIcon>
    <BarIcon $w={24} $ml={8}><Svg width="17" height="16" viewBox="0 0 17 16" fill="none"><path d="M3 1h11L10 7v4H7V7z" stroke="#d4d4d4"/><path d="M.6 1v14h6M16.400 1v8" stroke="#d4d4d4"/><path d="M9 13.500h2M12.500 13.500h2" stroke="#d4d4d4" strokeWidth="2"/></Svg></BarIcon>
    <DocTab $w={95} $c="#f0b400" $ml={3}><Star>*</Star><DbWrap><Svg width="11" height="11" viewBox="0 0 11 11"><path d="M0 1.500C0 0 11 0 11 1.500v8C11 11 0 11 0 9.500z" fill="#f0b400"/><path d="M0 4c0 1.500 11 1.500 11 0M0 7c0 1.500 11 1.500 11 0" stroke="#44484c" fill="none"/></Svg></DbWrap>Model1</DocTab>
    <DocTab $w={135}><Star>*</Star><TabFx>fx</TabFx>Find by pattern</DocTab>
    <DocTab $w={149} $ml={4} $pad={14}><TabFx>fx</TabFx>double quote test</DocTab>
    <ActiveTab><ActiveStar>*</ActiveStar><GreenBarsWrap><Svg width="12" height="13" viewBox="0 0 12 13"><path d="M0 6h2.500v7H0zM4.500 3H7v10H4.500zM9 0h2.500v13H9z" fill="#5cb20f"/></Svg></GreenBarsWrap>Discovery1<Tri $s={4.500} $c="#f0f0f0" $ml={9}/></ActiveTab>
    <DocTab $w={167} $ml={4} $pad={16}><TabFx>fx</TabFx>double quote test (1)</DocTab>
    <DocTab $w={144} $ml={4} $pad={16}><TabFx>fx</TabFx>This is a member</DocTab>
    <DocTab $w={124} $pad={16}><TabFx>fx</TabFx>Search String</DocTab>
    <BarIcon $w={40}><Plus size={17} color="#e0e0e0" strokeWidth={2}/></BarIcon>
    <BarRight>
      <Svg width="18" height="16" viewBox="0 0 18 16"><path d="M8 0L0 13l8 3z" fill="#5a5a5a"/><path d="M9 0l8 13-8 3z" fill="#8e8e8e"/><path d="M2 10l7 3M4 7l5 2M6 4l3 1" stroke="#252525"/></Svg>
      <Badge>19</Badge>
      <PinWrap><Svg width="15" height="16" viewBox="0 0 15 16" fill="none"><path d="M4 .7L11.500 6 8.500 7.500 8 12 1.500 6 5.500 5zM8 8.500l6 6.500" stroke="#a8a8a8" strokeWidth="1.100"/></Svg></PinWrap>
      <Tri $s={3.500} $ml={6} $c="#a8c8e0"/>
      <SpiralWrap><Svg width="17" height="17" viewBox="0 0 17 17" fill="none"><path d="M8.500 8.500a2 2 0 1 1 2 2 4 4 0 0 1-5-4 5.500 5.500 0 0 1 7-2.500 6.500 6.500 0 0 1 0 11 7.500 7.500 0 0 1-11-3 8 8 0 0 1 2-10" stroke="#a8a8a8" strokeWidth="1.300"/></Svg></SpiralWrap>
      <ClockWrap><Svg width="17" height="18" viewBox="0 0 17 18" fill="none"><circle cx="8" cy="10" r="7" stroke="#a8a8a8" strokeWidth="1.200" strokeDasharray="30 6"/><path d="M8 6v4h3M6 .8h5M13 2l2 2" stroke="#a8a8a8" strokeWidth="1.200"/></Svg></ClockWrap>
    </BarRight>
  </TabBar>
);

export default function App() {
  return (
    <Page>
      <Global/>
      <RibbonBar/>
      <Body>
        <ContentStrip>
          <ChevronRight size={17} color="#c8c8c8" strokeWidth={1.300}/>
          <ContentText>Content</ContentText>
        </ContentStrip>
        <LeftPanels/>
        <DropPanel/>
        <CenterPanel/>
        <RightPanel/>
      </Body>
      <TabsFooter/>
    </Page>
  );
}
